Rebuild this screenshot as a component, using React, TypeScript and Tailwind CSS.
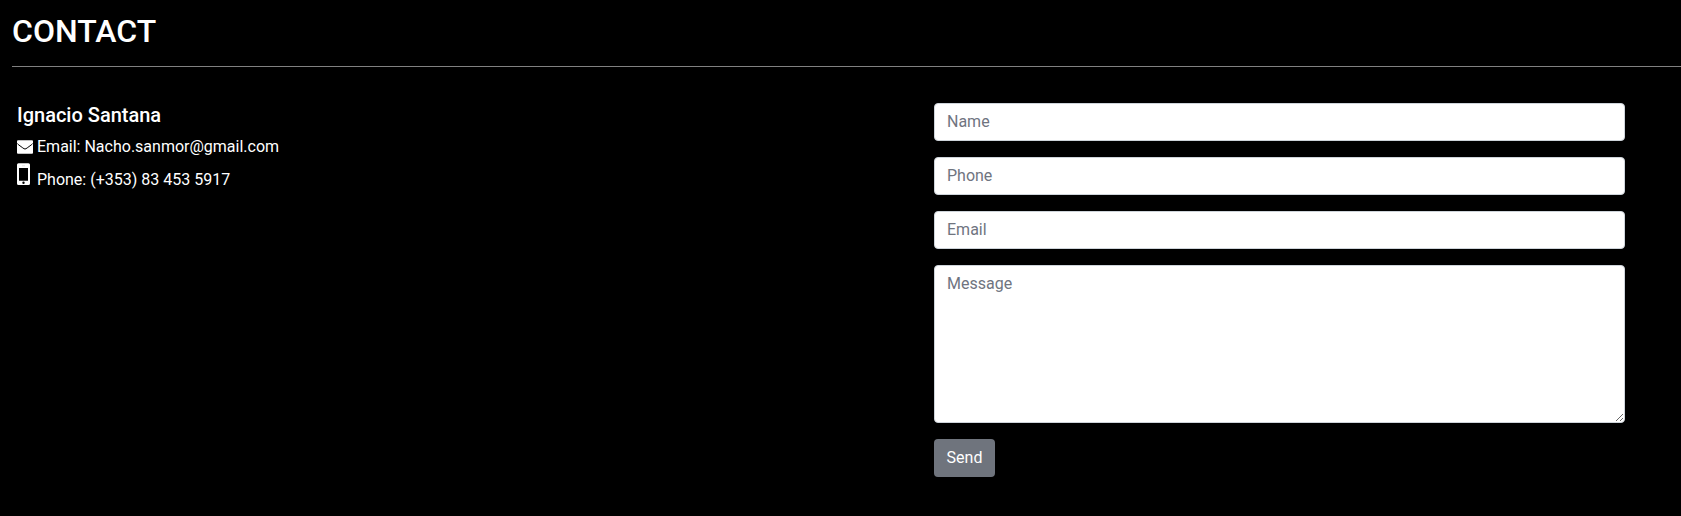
import React from "react";

const field =
  "block w-full rounded-[4px] border border-[#ced4da] bg-white px-3 py-1.5 text-base leading-6 text-[#495057] placeholder:text-[#6f747f] placeholder:opacity-100 outline-none";

function EnvelopeIcon() {
  return (
    <svg className="h-[14px] w-[16px] shrink-0" viewBox="0 0 16 14" aria-hidden="true">
      <rect y="0.300" width="16" height="13.400" rx="1" fill="currentColor" />
      <path
        d="M0 3.300c.4.500.8.900 1.200 1.200L5.800 7.900c.9.600 1.500 1.100 2.200 1.100s1.300-.5 2.200-1.100l4.600-3.400c.4-.3.800-.7 1.200-1.200"
        fill="none"
        stroke="#000000"
        strokeWidth="1"
      />
    </svg>
  );
}

function MobileIcon() {
  return (
    <svg className="h-[22px] w-[13px] shrink-0" viewBox="0 0 13 22" aria-hidden="true">
      <path
        fill="currentColor"
        fillRule="evenodd"
        d="M1.500 0.300h10a1.500 1.500 0 0 1 1.500 1.500V20.500a1.500 1.500 0 0 1-1.500 1.500H1.500a1.500 1.500 0 0 1-1.500-1.500V1.800a1.500 1.500 0 0 1 1.500-1.500zM2 5v12.700h9V5zM6.500 18.600a1.200 1.200 0 1 0 0 2.400a1.200 1.200 0 0 0 0-2.400z"
      />
      <path d="M5 2.800h3" stroke="#cccccc" strokeWidth=".6" />
    </svg>
  );
}

export default function App() {
  return (
    <main className="h-[516px] overflow-hidden bg-black pl-3 font-['Roboto',sans-serif] text-white">
      <h2 className="pt-3 text-[32px] leading-[38px] font-medium">CONTACT</h2>
      <hr className="mt-4 border-t border-[#808080]" />
      <div className="flex pt-9 pl-[5px]">
        <section className="w-[917px] shrink-0">
          <h5 className="text-xl leading-6 font-medium">Ignacio Santana</h5>
          <p className="mt-2 flex h-6 items-center gap-1 text-base leading-6">
            <EnvelopeIcon />
            <span>Email: Nacho.sanmor@gmail.com</span>
          </p>
          <div className="flex h-[33px] gap-[7px] text-base">
            <span className="pt-[4px]">
              <MobileIcon />
            </span>
            <span className="pt-[9px] leading-6">Phone: (+353) 83 453 5917</span>
          </div>
        </section>
        <form className="flex w-[691px] flex-col items-start gap-4" onSubmit={(e) => e.preventDefault()}>
          <input className={field} type="text" placeholder="Name" />
          <input className={field} type="tel" placeholder="Phone" />
          <input className={field} type="email" placeholder="Email" />
          <textarea className={`${field} h-[158px] resize-y`} placeholder="Message" />
          <button
            type="submit"
            className="h-[38px] w-[61px] rounded-[4px] bg-[#6f747d] text-center text-base leading-6 text-white"
          >
            Send
          </button>
        </form>
      </div>
    </main>
  );
}
